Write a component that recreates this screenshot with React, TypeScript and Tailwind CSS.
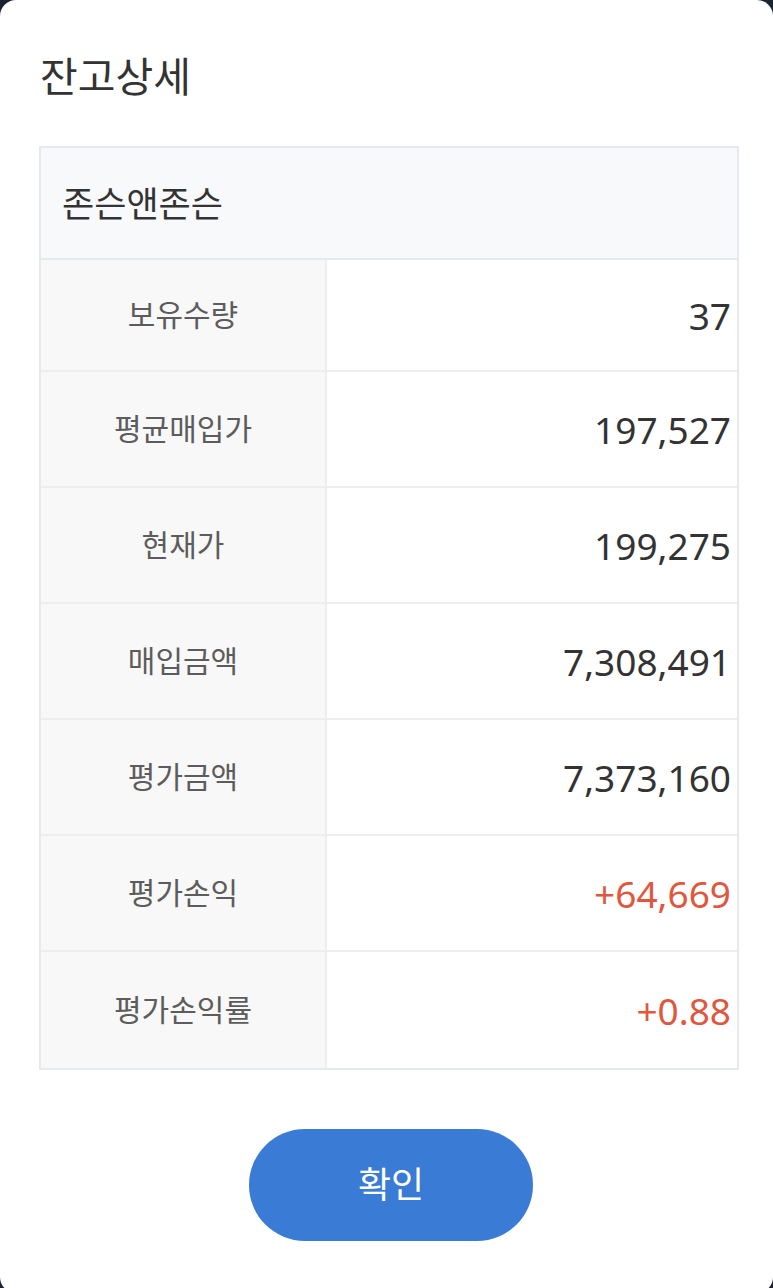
const rows = [
  { label: '보유수량', value: '37', h: 'h-[112px]' },
  { label: '평균매입가', value: '197,527', h: 'h-[116px]' },
  { label: '현재가', value: '199,275', h: 'h-[116px]' },
  { label: '매입금액', value: '7,308,491', h: 'h-[116px]' },
  { label: '평가금액', value: '7,373,160', h: 'h-[116px]' },
  { label: '평가손익', value: '+64,669', h: 'h-[116px]', red: true },
  { label: '평가손익률', value: '+0.88', h: 'h-[116px]', red: true },
];

const App = () => {
  return (
    <div
      className="h-[1288px] w-[773px] overflow-hidden bg-[#1b2330]"
      style={{ fontFamily: '"Noto Sans", "Noto Sans CJK KR", sans-serif' }}
    >
      <div className="h-[1293px] rounded-[16px] bg-white">
        <div className="flex h-[146px] items-center pl-[40px] pt-[6px]">
          <h1 className="text-[41px] leading-none text-[#333333]">잔고상세</h1>
        </div>

        <div className="ml-[39px] w-[700px] border-2 border-[#e6e9ed]">
          <div className="flex h-[112px] items-center border-b-2 border-[#e6e9ed] bg-[#f8f9fa] pl-[21px]">
            <span className="text-[35px] leading-none text-[#333333]">존슨앤존슨</span>
          </div>
          {rows.map((row, i) => (
            <div
              key={row.label}
              className={`grid grid-cols-[286px_1fr] ${row.h} ${
                i < rows.length - 1 ? 'border-b-2 border-[#eeeeee]' : ''
              }`}
            >
              <div className="flex items-center justify-center border-r-2 border-[#eeeeee] bg-[#f8f8f8]">
                <span className="text-[30px] leading-none text-[#5c5c5c]">{row.label}</span>
              </div>
              <div className="flex items-center justify-end pr-[6px]">
                <span
                  className={`text-[37px] leading-none ${
                    row.red ? 'text-[#e0573d]' : 'text-[#333333]'
                  }`}
                >
                  {row.value}
                </span>
              </div>
            </div>
          ))}
        </div>

        <div className="ml-[41px] flex w-[700px] justify-center pt-[59px]">
          <button className="flex h-[112px] w-[284px] items-center justify-center rounded-full bg-[#3a7bd5] text-[36px] leading-none text-white">
            확인
          </button>
        </div>
      </div>
    </div>
  );
};

export default App;
